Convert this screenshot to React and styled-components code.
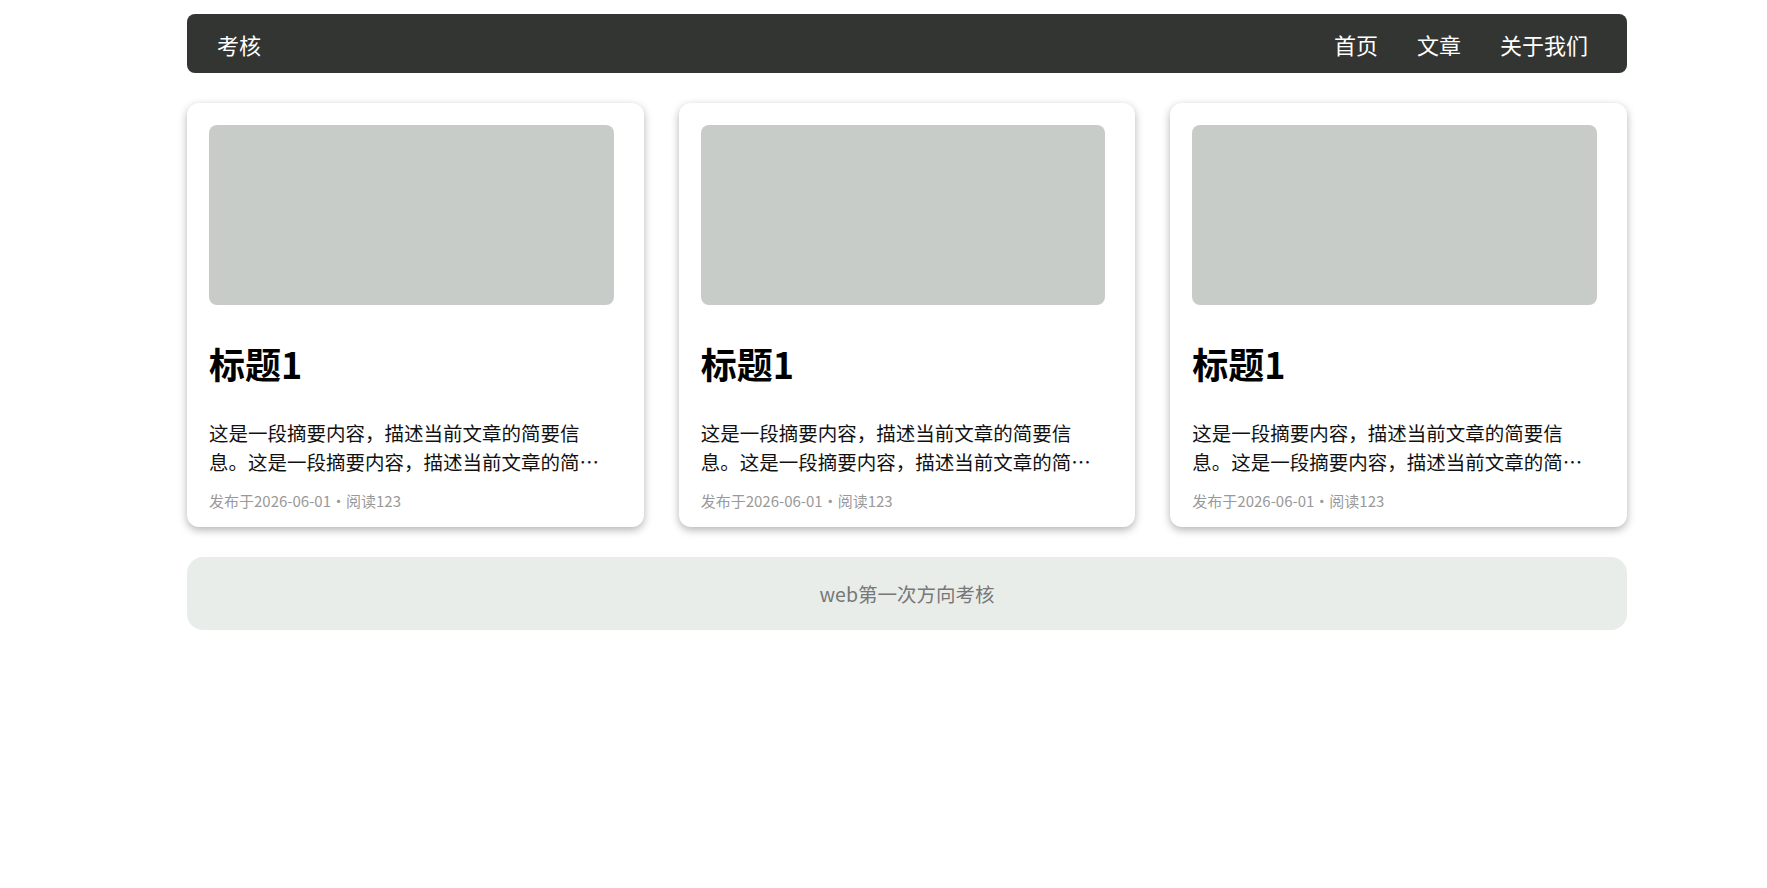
import React from "react";
import styled, { createGlobalStyle } from "styled-components";

const GlobalStyle = createGlobalStyle`
  html, body {
    margin: 0;
    padding: 0;
    background: #ffffff;
    font-family: "Noto Sans CJK SC", "Noto Sans", sans-serif;
    color: #111;
  }
`;

const Page = styled.div`
  padding: 14px 0 40px 187px;
`;

const Container = styled.div`
  width: 1440px;
  display: flex;
  flex-direction: column;
  gap: 30px;
`;

const NavBar = styled.header`
  height: 59px;
  background: #323532;
  border-radius: 8px;
  display: flex;
  align-items: center;
  justify-content: space-between;
  padding: 0 39px 0 30px;
  box-sizing: border-box;
`;

const Brand = styled.div`
  color: #ffffff;
  font-size: 22px;
  line-height: 1;
`;

const NavLinks = styled.nav`
  display: flex;
  align-items: center;
  gap: 39px;
`;

const NavLink = styled.a`
  color: #ffffff;
  font-size: 22px;
  line-height: 1;
  text-decoration: none;
  cursor: pointer;
`;

const CardGrid = styled.section`
  display: grid;
  grid-template-columns: repeat(3, 1fr);
  gap: 35px;
`;

const Card = styled.article`
  background: #ffffff;
  border-radius: 12px;
  box-shadow: 0 3px 8px rgba(0, 0, 0, 0.3);
  padding: 22px 30px 14px 22px;
  display: flex;
  flex-direction: column;
  box-sizing: border-box;
  height: 424px;
`;

const Thumb = styled.div`
  height: 180px;
  background: #c8ccc8;
  border-radius: 8px;
`;

const Title = styled.h2`
  margin: 37px 0 0;
  font-size: 36px;
  line-height: 42px;
  font-weight: 700;
  color: #000;
`;

const Summary = styled.p`
  margin: 34px 0 0;
  font-size: 19.5px;
  line-height: 29px;
  color: #111;
  display: -webkit-box;
  -webkit-line-clamp: 2;
  -webkit-box-orient: vertical;
  overflow: hidden;
`;

const Meta = styled.div`
  margin-top: 15px;
  font-size: 15px;
  line-height: 20px;
  color: #999;
`;

const Footer = styled.footer`
  height: 73px;
  background: #e9edea;
  border-radius: 16px;
  display: flex;
  align-items: center;
  justify-content: center;
  color: #777;
  font-size: 19.5px;
`;

const cards = [1, 2, 3].map((id) => ({
  id,
  title: "标题1",
  summary:
    "这是一段摘要内容，描述当前文章的简要信息。这是一段摘要内容，描述当前文章的简要信息。",
  meta: "发布于2026-06-01•阅读123",
}));

export default function App() {
  return (
    <>
      <GlobalStyle />
      <Page>
        <Container>
          <NavBar>
            <Brand>考核</Brand>
            <NavLinks>
              <NavLink>首页</NavLink>
              <NavLink>文章</NavLink>
              <NavLink>关于我们</NavLink>
            </NavLinks>
          </NavBar>
          <CardGrid>
            {cards.map((c) => (
              <Card key={c.id}>
                <Thumb />
                <Title>{c.title}</Title>
                <Summary>{c.summary}</Summary>
                <Meta>{c.meta}</Meta>
              </Card>
            ))}
          </CardGrid>
          <Footer>web第一次方向考核</Footer>
        </Container>
      </Page>
    </>
  );
}
